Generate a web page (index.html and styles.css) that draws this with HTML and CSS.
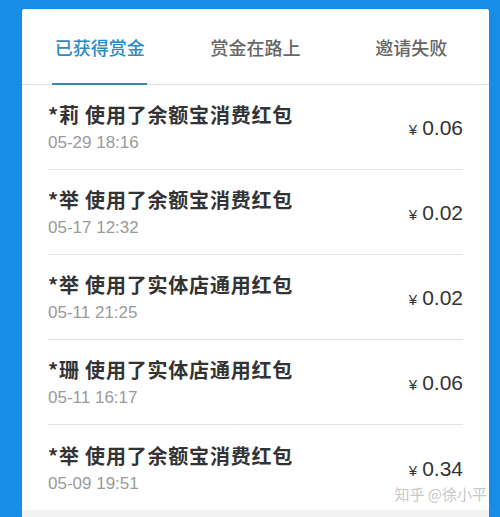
FILE: index.html
```html
<!DOCTYPE html>
<html lang="zh-CN">
  <head>
    <meta charset="UTF-8" />
    <meta name="viewport" content="width=device-width, initial-scale=1.0" />
    <title>赏金</title>
    <link rel="stylesheet" href="styles.css">
  </head>
  <body>
    <div class="card">
      <div class="tabs">
        <div class="tab active"><span>已获得赏金</span></div>
        <div class="tab"><span>赏金在路上</span></div>
        <div class="tab"><span>邀请失败</span></div>
      </div>
      <div class="list">
        <div class="row">
          <div class="info">
            <div class="title">*莉 使用了余额宝消费红包</div>
            <div class="date">05-29 18:16</div>
          </div>
          <div class="amount"><span class="yen">¥</span>0.06</div>
        </div>
        <div class="row">
          <div class="info">
            <div class="title">*举 使用了余额宝消费红包</div>
            <div class="date">05-17 12:32</div>
          </div>
          <div class="amount"><span class="yen">¥</span>0.02</div>
        </div>
        <div class="row">
          <div class="info">
            <div class="title">*举 使用了实体店通用红包</div>
            <div class="date">05-11 21:25</div>
          </div>
          <div class="amount"><span class="yen">¥</span>0.02</div>
        </div>
        <div class="row">
          <div class="info">
            <div class="title">*珊 使用了实体店通用红包</div>
            <div class="date">05-11 16:17</div>
          </div>
          <div class="amount"><span class="yen">¥</span>0.06</div>
        </div>
        <div class="row">
          <div class="info">
            <div class="title">*举 使用了余额宝消费红包</div>
            <div class="date">05-09 19:51</div>
          </div>
          <div class="amount"><span class="yen">¥</span>0.34</div>
        </div>
      </div>
      <div class="watermark">知乎 @徐小平</div>
    </div>
  </body>
</html>
```

FILE: styles.css
```css
body {
  margin: 0;
  background-color: #168de6;
  font-family: "Liberation Sans", "Noto Sans CJK SC", sans-serif;
  overflow: hidden;
}
.card {
  position: relative;
  margin: 9px 11px 0 22px;
  height: 508px;
  background: #f2f2f3;
  border-radius: 3px 3px 0 0;
  overflow: hidden;
}
.tabs {
  display: flex;
  height: 75px;
  background: #fff;
  border-bottom: 1px solid #dedede;
}
.tab {
  flex: 1;
  display: flex;
  align-items: center;
  justify-content: center;
  position: relative;
  font-size: 18px;
  font-weight: 500;
  color: #666;
  font-family: "Noto Sans CJK SC", sans-serif;
}
.tab.active {
  color: #2d8bc4;
}
.tab.active::after {
  content: "";
  position: absolute;
  bottom: -1px;
  left: 30px;
  width: 95px;
  height: 2px;
  background: #3a87b0;
}
.list {
  background: #fff;
}
.row {
  margin: 0 26px;
  height: 84px;
  border-bottom: 1px solid #e3e3e3;
  display: flex;
  align-items: center;
  justify-content: space-between;
}
.row:last-child {
  border-bottom: none;
  height: 85px;
}
.title {
  font-family: "Noto Sans CJK SC", sans-serif;
  font-size: 20px;
  font-weight: bold;
  letter-spacing: 0.8px;
  line-height: 28px;
  color: #333;
}
.date {
  font-size: 17px;
  line-height: 20px;
  margin-top: 4px;
  color: #9a9a9a;
}
.amount {
  font-size: 21px;
  color: #333;
  padding-top: 2px;
}
.yen {
  font-size: 15px;
  margin-right: 5px;
}
.watermark {
  position: absolute;
  right: 2px;
  top: 474px;
  font-family: "Noto Sans CJK SC", sans-serif;
  font-size: 15px;
  color: #c8c8c8;
}
```
